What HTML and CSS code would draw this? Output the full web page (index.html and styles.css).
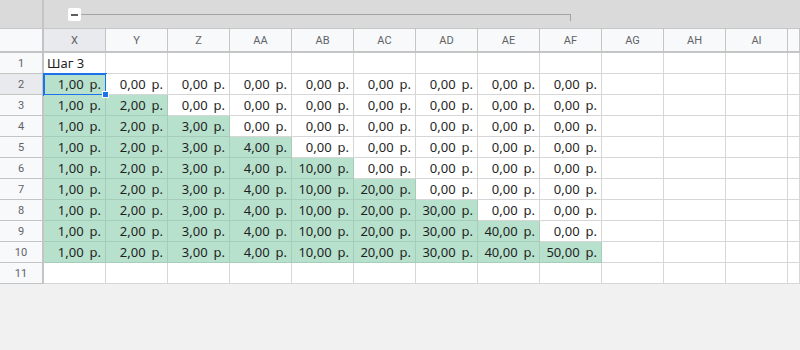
FILE: index.html
```html
<!DOCTYPE html>
<html lang="ru">
  <head>
    <meta charset="UTF-8" />
    <title>Таблица</title>
    <link rel="stylesheet" href="styles.css">
  </head>
  <body>
    <div class="groupbar">
      <div class="corner"></div>
      <div class="group">
        <div class="collapse"><span></span></div>
        <div class="bracket"></div>
      </div>
    </div>

    <div id="sheet" class="sheet"></div>

    <script>
      const sheet = document.getElementById("sheet");
      const columns = ["X", "Y", "Z", "AA", "AB", "AC", "AD", "AE", "AF", "AG", "AH", "AI", ""];
      const amounts = [1, 2, 3, 4, 10, 20, 30, 40, 50];

      function addCell(className, html) {
        const cell = document.createElement("div");
        cell.className = className;
        cell.innerHTML = html;
        sheet.appendChild(cell);
        return cell;
      }

      // header row
      addCell("head corner-head", "");
      columns.forEach((name, i) => {
        addCell(i === 0 ? "head active" : "head", name);
      });

      for (let row = 1; row <= 11; row++) {
        addCell(row === 2 ? "rownum active" : "rownum", row);

        columns.forEach((name, col) => {
          let cls = "cell";
          let html = "";

          if (row === 1 && col === 0) {
            cls += " left";
            html = "Шаг 3";
          } else if (row >= 2 && row <= 10 && col < amounts.length) {
            const filled = col <= row - 2;
            const value = filled ? amounts[col] : 0;
            if (filled) cls += " green";
            html = value + ",00<span class=\"cur\">р.</span>";
          }

          const cell = addCell(cls, html);
          if (row === 2 && col === 0) {
            cell.classList.add("selected");
            cell.innerHTML += '<i class="handle"></i>';
          }
        });
      }
    </script>
  </body>
</html>
```

FILE: styles.css
```css
* {
  box-sizing: border-box;
  margin: 0;
  padding: 0;
}

body {
  width: 800px;
  height: 350px;
  overflow: hidden;
  background-color: #f1f1f1;
  font-family: "Noto Sans", Arial, sans-serif;
}

.groupbar {
  display: flex;
  height: 29px;
  background-color: #dadada;
  border-bottom: 1px solid #c6c6c6;
}

.corner {
  width: 44px;
  border-right: 2px solid #c4c4c4;
}

.group {
  display: flex;
  align-items: flex-start;
  padding: 8px 0 0 24px;
}

.collapse {
  display: flex;
  align-items: center;
  justify-content: center;
  width: 13px;
  height: 13px;
  background-color: #fff;
  border-radius: 2px;
}

.collapse span {
  width: 7px;
  height: 2px;
  background-color: #5f5f5f;
}

.bracket {
  width: 490px;
  height: 7px;
  margin-top: 6px;
  border-top: 1px solid #a4a4a4;
  border-right: 1px solid #a4a4a4;
}

.sheet {
  display: grid;
  grid-template-columns: 44px repeat(12, 62px) 1fr;
  grid-template-rows: 24px repeat(11, 21px);
}

.head {
  display: flex;
  align-items: center;
  justify-content: center;
  background-color: #f8f9fa;
  border-right: 1px solid #c4c4c4;
  border-bottom: 2px solid #c4c4c4;
  font-family: Roboto, Arial, sans-serif;
  font-size: 11px;
  color: #5f6368;
}

.head.corner-head {
  border-right-width: 2px;
}

.head.active,
.rownum.active {
  background-color: #e8eaed;
}

.rownum {
  display: flex;
  align-items: center;
  justify-content: center;
  background-color: #f8f9fa;
  border-right: 2px solid #c4c4c4;
  border-bottom: 1px solid #c4c4c4;
  font-family: Roboto, Arial, sans-serif;
  font-size: 11px;
  color: #5f6368;
}

.cell {
  position: relative;
  display: flex;
  align-items: center;
  justify-content: flex-end;
  padding-right: 4px;
  background-color: #fff;
  border-right: 1px solid rgba(0, 0, 0, 0.11);
  border-bottom: 1px solid rgba(0, 0, 0, 0.11);
  background-clip: padding-box;
  font-size: 13px;
  color: #1f1f1f;
  white-space: nowrap;
}

.cell.left {
  justify-content: flex-start;
  padding-left: 3px;
}

.cell.green {
  background-color: #b7e1cd;
  border-color: #a6cdba;
}

.cur {
  margin-left: 6px;
}

.cell.selected {
  outline: 2px solid #1a73e8;
  outline-offset: -1px;
}

.handle {
  position: absolute;
  right: -4px;
  bottom: -4px;
  width: 7px;
  height: 7px;
  background-color: #1a73e8;
  border: 1px solid #fff;
  z-index: 2;
}
```
